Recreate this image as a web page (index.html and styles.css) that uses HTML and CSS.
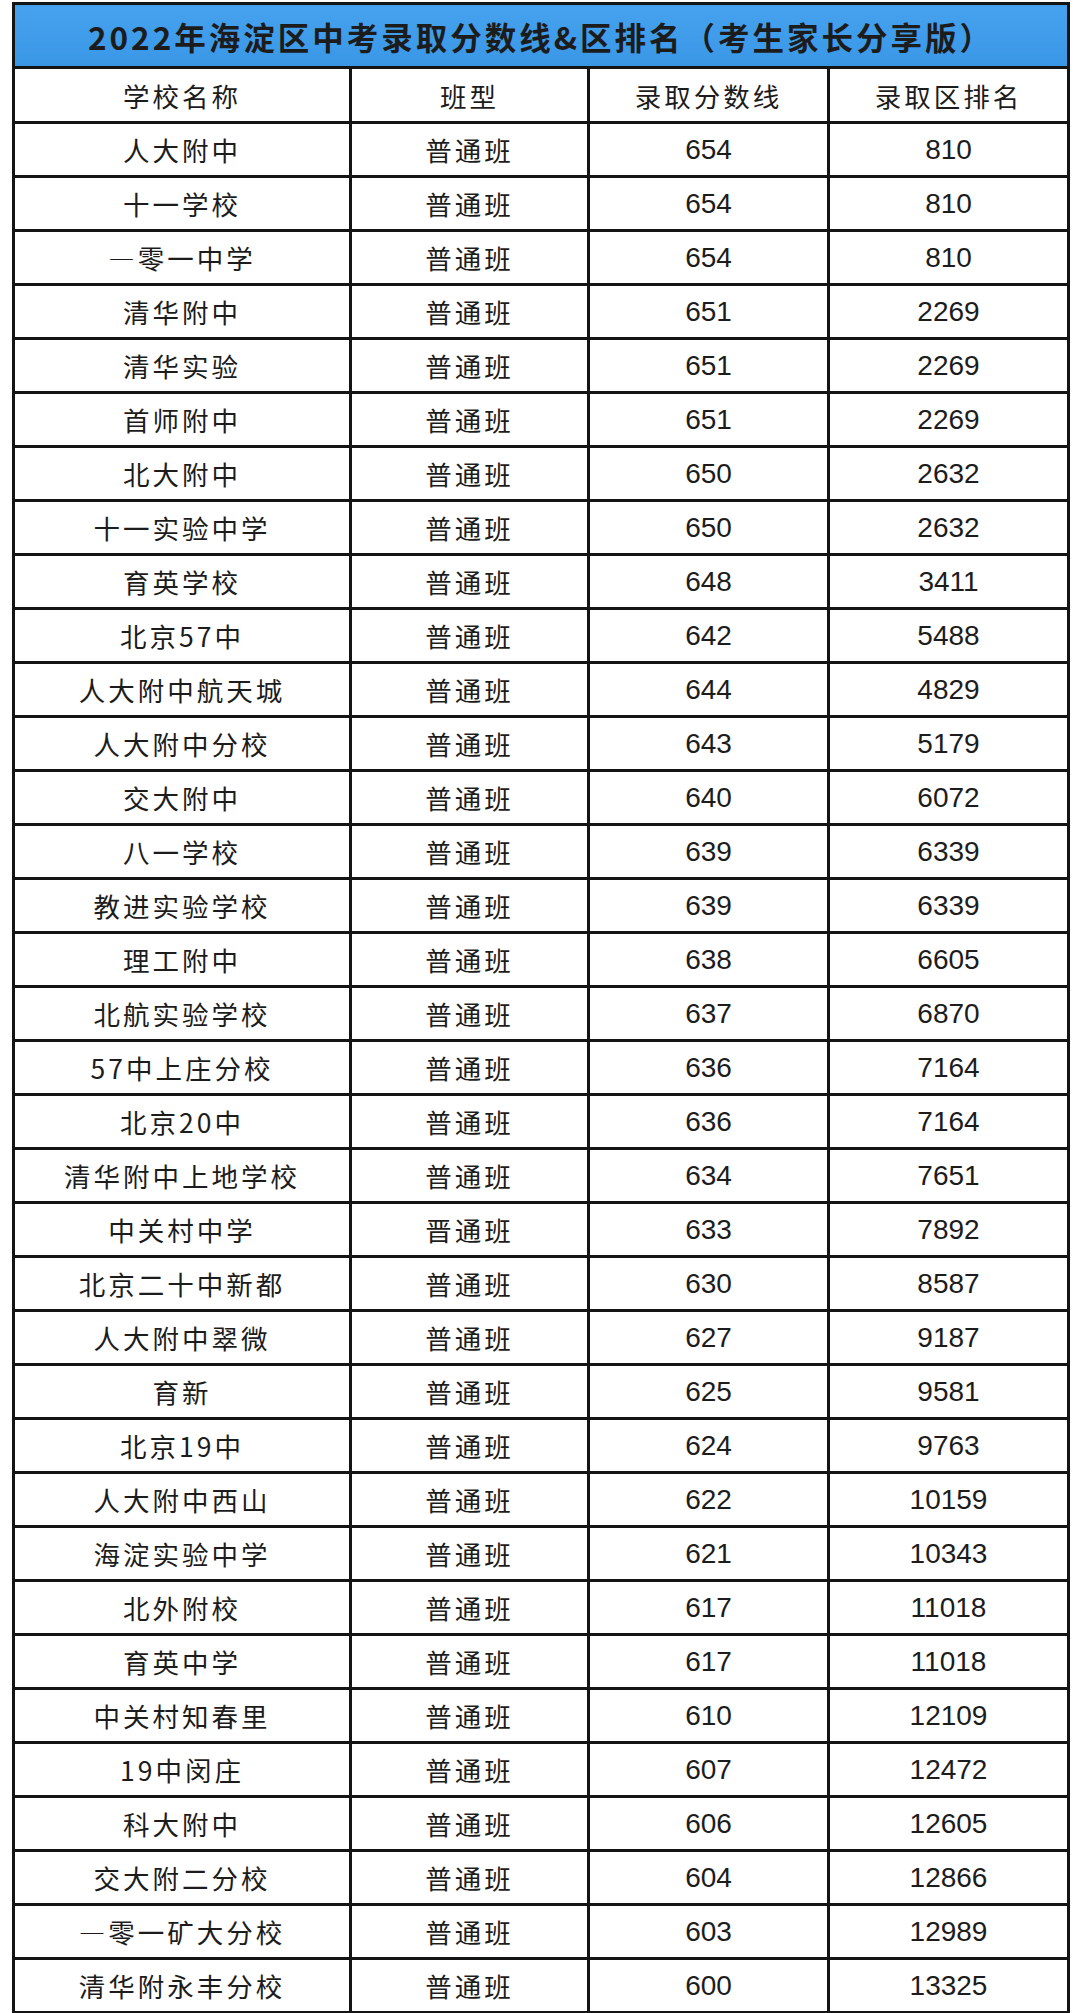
FILE: index.html
```html
<!DOCTYPE html>
<html lang="zh-CN">
<head>
<meta charset="utf-8">
<title>2022年海淀区中考录取分数线&amp;区排名</title>
<link rel="stylesheet" href="styles.css">
</head>
<body>
<div class="page">
<table class="score">
<colgroup>
<col class="c1"><col class="c2"><col class="c3"><col class="c4">
</colgroup>
<thead>
<tr class="title-row"><th colspan="4" class="title">2022年海淀区中考录取分数线&amp;区排名（考生家长分享版）</th></tr>
<tr class="head-row"><th>学校名称</th><th>班型</th><th>录取分数线</th><th>录取区排名</th></tr>
</thead>
<tbody>
<tr><td class="cn">人大附中</td><td class="cn">普通班</td><td class="num">654</td><td class="num">810</td></tr>
<tr><td class="cn">十一学校</td><td class="cn">普通班</td><td class="num">654</td><td class="num">810</td></tr>
<tr><td class="cn">—零一中学</td><td class="cn">普通班</td><td class="num">654</td><td class="num">810</td></tr>
<tr><td class="cn">清华附中</td><td class="cn">普通班</td><td class="num">651</td><td class="num">2269</td></tr>
<tr><td class="cn">清华实验</td><td class="cn">普通班</td><td class="num">651</td><td class="num">2269</td></tr>
<tr><td class="cn">首师附中</td><td class="cn">普通班</td><td class="num">651</td><td class="num">2269</td></tr>
<tr><td class="cn">北大附中</td><td class="cn">普通班</td><td class="num">650</td><td class="num">2632</td></tr>
<tr><td class="cn">十一实验中学</td><td class="cn">普通班</td><td class="num">650</td><td class="num">2632</td></tr>
<tr><td class="cn">育英学校</td><td class="cn">普通班</td><td class="num">648</td><td class="num">3411</td></tr>
<tr><td class="cn">北京57中</td><td class="cn">普通班</td><td class="num">642</td><td class="num">5488</td></tr>
<tr><td class="cn">人大附中航天城</td><td class="cn">普通班</td><td class="num">644</td><td class="num">4829</td></tr>
<tr><td class="cn">人大附中分校</td><td class="cn">普通班</td><td class="num">643</td><td class="num">5179</td></tr>
<tr><td class="cn">交大附中</td><td class="cn">普通班</td><td class="num">640</td><td class="num">6072</td></tr>
<tr><td class="cn">八一学校</td><td class="cn">普通班</td><td class="num">639</td><td class="num">6339</td></tr>
<tr><td class="cn">教进实验学校</td><td class="cn">普通班</td><td class="num">639</td><td class="num">6339</td></tr>
<tr><td class="cn">理工附中</td><td class="cn">普通班</td><td class="num">638</td><td class="num">6605</td></tr>
<tr><td class="cn">北航实验学校</td><td class="cn">普通班</td><td class="num">637</td><td class="num">6870</td></tr>
<tr><td class="cn">57中上庄分校</td><td class="cn">普通班</td><td class="num">636</td><td class="num">7164</td></tr>
<tr><td class="cn">北京20中</td><td class="cn">普通班</td><td class="num">636</td><td class="num">7164</td></tr>
<tr><td class="cn">清华附中上地学校</td><td class="cn">普通班</td><td class="num">634</td><td class="num">7651</td></tr>
<tr><td class="cn">中关村中学</td><td class="cn">晋通班</td><td class="num">633</td><td class="num">7892</td></tr>
<tr><td class="cn">北京二十中新都</td><td class="cn">普通班</td><td class="num">630</td><td class="num">8587</td></tr>
<tr><td class="cn">人大附中翠微</td><td class="cn">普通班</td><td class="num">627</td><td class="num">9187</td></tr>
<tr><td class="cn">育新</td><td class="cn">普通班</td><td class="num">625</td><td class="num">9581</td></tr>
<tr><td class="cn">北京19中</td><td class="cn">普通班</td><td class="num">624</td><td class="num">9763</td></tr>
<tr><td class="cn">人大附中西山</td><td class="cn">普通班</td><td class="num">622</td><td class="num">10159</td></tr>
<tr><td class="cn">海淀实验中学</td><td class="cn">普通班</td><td class="num">621</td><td class="num">10343</td></tr>
<tr><td class="cn">北外附校</td><td class="cn">普通班</td><td class="num">617</td><td class="num">11018</td></tr>
<tr><td class="cn">育英中学</td><td class="cn">普通班</td><td class="num">617</td><td class="num">11018</td></tr>
<tr><td class="cn">中关村知春里</td><td class="cn">普通班</td><td class="num">610</td><td class="num">12109</td></tr>
<tr><td class="cn">19中闵庄</td><td class="cn">普通班</td><td class="num">607</td><td class="num">12472</td></tr>
<tr><td class="cn">科大附中</td><td class="cn">普通班</td><td class="num">606</td><td class="num">12605</td></tr>
<tr><td class="cn">交大附二分校</td><td class="cn">普通班</td><td class="num">604</td><td class="num">12866</td></tr>
<tr><td class="cn">—零一矿大分校</td><td class="cn">普通班</td><td class="num">603</td><td class="num">12989</td></tr>
<tr><td class="cn">清华附永丰分校</td><td class="cn">普通班</td><td class="num">600</td><td class="num">13325</td></tr>
</tbody>
</table>
</div>
</body>
</html>
```
FILE: styles.css
```css
html, body {
  margin: 0;
  padding: 0;
  background: #ffffff;
}
.page {
  padding: 2px 15px 0 12px;
}
.score {
  width: 1055px;
  border-collapse: collapse;
  table-layout: fixed;
  border: 3px solid #141414;
}
.c1 { width: 337px; }
.c2 { width: 238px; }
.c3 { width: 240px; }
.c4 { width: 240px; }
.score th, .score td {
  border: 3px solid #141414;
  text-align: center;
  vertical-align: middle;
  padding: 0;
  color: #1c1c1c;
}
.title-row { height: 64px; }
.title {
  background: linear-gradient(#46a2ee, #3a97e6);
  color: #ffffff;
  font-family: "Noto Sans CJK SC", "Liberation Sans", sans-serif;
  font-weight: 700;
  font-size: 31.5px;
  letter-spacing: 3px;
  padding-left: 6px;
}
.head-row { height: 55px; }
.head-row th {
  font-family: "Noto Sans CJK SC", sans-serif;
  font-weight: 400;
  font-size: 26.5px;
  letter-spacing: 3px;
}
.score tbody tr { height: 54px; }
.cn {
  font-family: "Noto Sans CJK SC", sans-serif;
  font-size: 26.5px;
  letter-spacing: 3px;
}
.num {
  font-family: "Liberation Sans", Arial, sans-serif;
  font-size: 28px;
}
```
